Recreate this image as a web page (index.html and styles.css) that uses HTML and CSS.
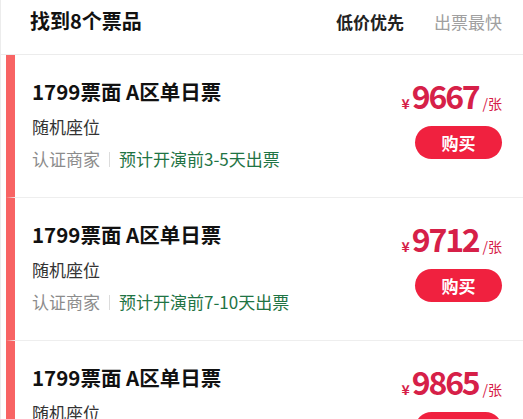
FILE: index.html
```html
<!DOCTYPE html>
<html>
  <head>
    <meta charset="utf-8" />
    <title>票品列表</title>
    <link rel="stylesheet" href="styles.css">
  </head>
  <body>
    <div class="page">
      <div class="head">
        <h2 class="found">找到8个票品</h2>
        <div class="sort">
          <span class="sort-item active">低价优先</span>
          <span class="sort-item">出票最快</span>
        </div>
      </div>

      <div class="list">
        <div class="ticket">
          <div class="info">
            <p class="name">1799票面 A区单日票</p>
            <p class="seat">随机座位</p>
            <p class="meta">
              <span class="seller">认证商家</span><span class="bar"></span><span class="ship">预计开演前3-5天出票</span>
            </p>
          </div>
          <div class="buy">
            <p class="price"><span class="yen">¥</span><span class="num">9667</span><span class="unit">/张</span></p>
            <button class="btn">购买</button>
          </div>
        </div>

        <div class="ticket">
          <div class="info">
            <p class="name">1799票面 A区单日票</p>
            <p class="seat">随机座位</p>
            <p class="meta">
              <span class="seller">认证商家</span><span class="bar"></span><span class="ship">预计开演前7-10天出票</span>
            </p>
          </div>
          <div class="buy">
            <p class="price"><span class="yen">¥</span><span class="num">9712</span><span class="unit">/张</span></p>
            <button class="btn">购买</button>
          </div>
        </div>

        <div class="ticket">
          <div class="info">
            <p class="name">1799票面 A区单日票</p>
            <p class="seat">随机座位</p>
            <p class="meta">
              <span class="seller">认证商家</span><span class="bar"></span><span class="ship">预计开演前3-5天出票</span>
            </p>
          </div>
          <div class="buy">
            <p class="price"><span class="yen">¥</span><span class="num">9865</span><span class="unit">/张</span></p>
            <button class="btn">购买</button>
          </div>
        </div>
      </div>
    </div>
  </body>
</html>
```

FILE: styles.css
```css
body {
  margin: 0;
  background: #fff;
  font-family: "Noto Sans CJK SC", "Noto Sans", sans-serif;
  color: #111;
  overflow: hidden;
}

p {
  margin: 0;
}

.page {
  border-left: 1px solid #ececec;
}

.head {
  height: 55px;
  box-sizing: border-box;
  padding: 7px 21px 0 29px;
  display: flex;
  justify-content: space-between;
  border-bottom: 1px solid #ececec;
}

.found {
  margin: 0;
  font-size: 20px;
  line-height: 28px;
  font-weight: bold;
}

.sort {
  display: flex;
  gap: 30px;
  padding-top: 1px;
}

.sort-item {
  font-size: 17px;
  line-height: 28px;
  color: #a0a0a0;
}

.sort-item.active {
  color: #222;
  font-weight: bold;
}

/* список билетов */
.list {
  margin-left: 5px;
}

.ticket {
  height: 143px;
  box-sizing: border-box;
  border-left: 9px solid #f86464;
  border-bottom: 1px solid #eeeeee;
  display: flex;
  justify-content: space-between;
  padding: 22px 21px 0 17px;
}

.name {
  font-size: 20.5px;
  line-height: 28px;
  font-weight: bold;
  color: #111;
}

.seat {
  margin-top: 10px;
  font-size: 17px;
  line-height: 24px;
  color: #333;
}

.meta {
  margin-top: 8px;
  font-size: 17px;
  line-height: 24px;
  display: flex;
  align-items: center;
}

.seller {
  color: #8c8c8c;
}

.bar {
  width: 1px;
  height: 15px;
  background: #dcdcdc;
  margin: 0 9px;
}

.ship {
  color: #1f7444;
}

.buy {
  display: flex;
  flex-direction: column;
  align-items: flex-end;
}

.price {
  height: 36px;
  display: flex;
  align-items: baseline;
  color: #d62048;
  font-weight: bold;
  white-space: nowrap;
}

.price span {
  line-height: 36px;
}

.yen {
  font-size: 14px;
  margin-right: 2px;
}

.num {
  font-size: 32px;
  letter-spacing: -2.2px;
}

.unit {
  font-size: 14px;
  font-weight: normal;
  margin-left: 4px;
}

.btn {
  margin-top: 13px;
  width: 87px;
  height: 33px;
  border: none;
  border-radius: 17px;
  background: #f0213f;
  color: #fff;
  font-family: inherit;
  font-size: 17px;
  font-weight: bold;
  padding: 0;
}
```
